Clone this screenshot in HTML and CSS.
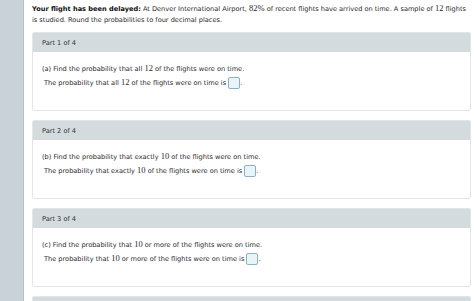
FILE: index.html
```html
<!DOCTYPE html>
<html lang="en">
<head>
<meta charset="UTF-8" />
<title>Flight delays - Homework</title>
<link rel="stylesheet" href="styles.css">
</head>
<body>

<div class="layout">
  <aside class="side-strip"></aside>

  <main class="content">
    <p class="intro">
      <b>Your flight has been delayed:</b> At Denver International Airport, <span class="num">82%</span> of recent flights have arrived on time. A sample of <span class="num">12</span> flights is studied. Round the probabilities to four decimal places.
    </p>

    <section class="part">
      <div class="part-head">Part 1 of 4</div>
      <div class="part-body">
        <p class="question">(a) Find the probability that all <span class="num">12</span> of the flights were on time.</p>
        <p class="answer">The probability that all <span class="num">12</span> of the flights were on time is <span class="answer-box"></span>.</p>
      </div>
    </section>

    <section class="part">
      <div class="part-head">Part 2 of 4</div>
      <div class="part-body">
        <p class="question">(b) Find the probability that exactly <span class="num">10</span> of the flights were on time.</p>
        <p class="answer">The probability that exactly <span class="num">10</span> of the flights were on time is <span class="answer-box"></span>.</p>
      </div>
    </section>

    <section class="part">
      <div class="part-head">Part 3 of 4</div>
      <div class="part-body">
        <p class="question">(c) Find the probability that <span class="num">10</span> or more of the flights were on time.</p>
        <p class="answer">The probability that <span class="num">10</span> or more of the flights were on time is <span class="answer-box"></span>.</p>
      </div>
    </section>

    <section class="part part-last">
      <div class="part-head"></div>
    </section>
  </main>
</div>

</body>
</html>
```

FILE: styles.css
```css
body {
  margin: 0;
  padding: 0;
  font-family: "DejaVu Sans", Verdana, sans-serif;
  font-size: 6.6px;
  color: #2a2a2a;
  background: #fff;
  overflow: hidden;
}
.layout {
  display: flex;
  height: 301px;
  overflow: hidden;
}
.side-strip {
  width: 23px;
  flex-shrink: 0;
  background: #c9d2d8;
  border-right: 1px solid #b4bec4;
}
.content {
  flex: 1;
  padding: 4px 3px 0 8px;
}
.intro {
  margin: 0 0 6px 0;
  line-height: 11px;
}
.intro b {
  color: #111;
}
.num {
  font-family: "Liberation Serif", "Times New Roman", serif;
  font-size: 8.5px;
  line-height: 1;
}
.part {
  border: 1px solid #e2e6e8;
  border-radius: 2px;
  margin-bottom: 9px;
  background: #fff;
}
.part-head {
  background: #d3dbde;
  height: 19px;
  line-height: 20px;
  padding-left: 9px;
  color: #333;
}
.part-body {
  height: 58px;
  padding: 11px 0 0 9px;
  box-sizing: border-box;
}
.question {
  margin: 0 0 2px 0;
  line-height: 12px;
}
.answer {
  margin: 0;
  padding-left: 2px;
  line-height: 12px;
}
.answer-box {
  display: inline-block;
  width: 10px;
  height: 10px;
  border: 1px solid #8fb0bd;
  border-radius: 2px;
  background: #e9f4f8;
  vertical-align: middle;
}
```
